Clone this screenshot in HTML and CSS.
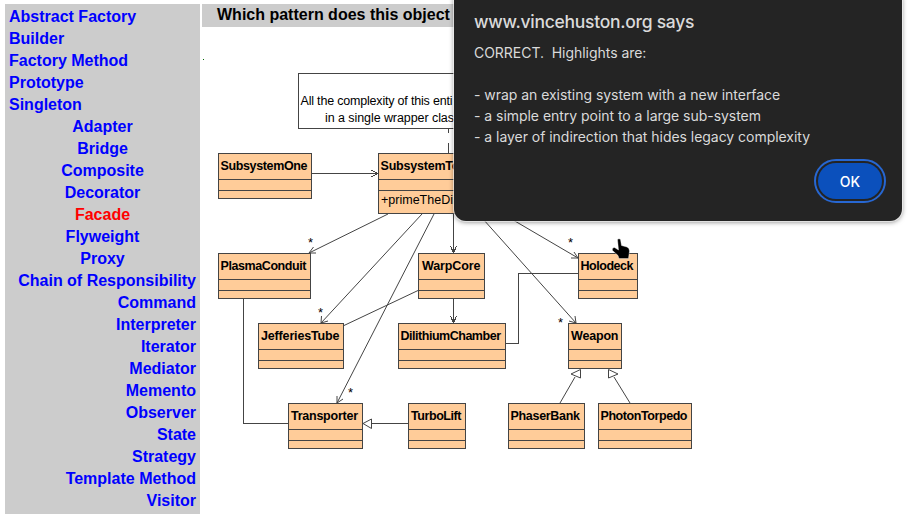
FILE: index.html
```html
<!DOCTYPE html>
<html lang="en">
<head>
<meta charset="utf-8">
<title>Design Patterns Quiz</title>
<link rel="stylesheet" href="styles.css">
</head>
<body>
<div class="page">
  <nav class="patterns">
    <ul class="group creational">
      <li>Abstract Factory</li><li>Builder</li><li>Factory Method</li><li>Prototype</li><li>Singleton</li>
    </ul>
    <ul class="group structural">
      <li>Adapter</li><li>Bridge</li><li>Composite</li><li>Decorator</li><li class="chosen">Facade</li><li>Flyweight</li><li>Proxy</li>
    </ul>
    <ul class="group behavioral">
      <li>Chain of Responsibility</li><li>Command</li><li>Interpreter</li><li>Iterator</li><li>Mediator</li><li>Memento</li><li>Observer</li><li>State</li><li>Strategy</li><li>Template Method</li><li>Visitor</li>
    </ul>
  </nav>
  <main class="content">
    <h1 class="question">Which pattern does this object</h1>
    <svg class="diagram" viewBox="202 27 721 490" width="721" height="490">
      <rect x="203" y="59" width="1" height="1" fill="#060"/>
      <g class="box note"><path d="M298.500 73.500H528.500V128.500H298.500Z"/></g>
      <text class="plain" x="300.500" y="105" textLength="152">All the complexity of this enti</text>
      <text class="plain" x="325" y="122" textLength="129">in a single wrapper clas</text>
      <g class="line">
        <path d="M448.500 129V133M448.500 143V153"/>
        <path d="M312 173.500H378M371 170L378 173.500L371 177"/>
        <path d="M453.500 214V253M450.500 246L453.500 253L456.500 246"/>
        <path d="M453.500 299V323M450.500 316L453.500 323L456.500 316"/>
        <path d="M243.500 299V423.500H288"/>
        <path d="M506 343.500H518.500V273.500H578"/>
        <path d="M372 423.500H408"/>
      </g>
      <g class="slant">
        <path d="M388 214L309 253M313.500 247L309 253L316 253"/>
        <path d="M422 214L321 323M321.500 316L321 323L328 321"/>
        <path d="M434 214L337 403M337 396L337 403L343 399"/>
        <path d="M418 290.500L344 325.500"/>
        <path d="M483 219L576 323M569 321L576 323L575 316"/>
        <path d="M508 217L578 258M571 258L578 258L574 252"/>
        <path d="M560 403L575 377M630 403L614 377"/>
        <path d="M363 423.500L371.500 419V428.500Z"/>
        <path d="M580.500 369.500L571 374L580.500 378Z"/>
        <path d="M608.500 369.500L618 374L608.500 378Z"/>
      </g>
      <g class="box">
        <path d="M218.500 153.500H311.500V198.500H218.500ZM218.500 179.500H311.500M218.500 190.500H311.500"/>
        <path d="M378.500 153.500H528.500V213.500H378.500ZM378.500 179.500H528.500M378.500 190.500H528.500"/>
        <path d="M218.500 253.500H310.500V298.500H218.500ZM218.500 279.500H310.500M218.500 290.500H310.500"/>
        <path d="M418.500 253.500H484.500V298.500H418.500ZM418.500 279.500H484.500M418.500 290.500H484.500"/>
        <path d="M578.500 253.500H637.500V298.500H578.500ZM578.500 279.500H637.500M578.500 290.500H637.500"/>
        <path d="M258.500 323.500H343.500V368.500H258.500ZM258.500 349.500H343.500M258.500 360.500H343.500"/>
        <path d="M398.500 323.500H505.500V368.500H398.500ZM398.500 349.500H505.500M398.500 360.500H505.500"/>
        <path d="M568.500 323.500H621.500V368.500H568.500ZM568.500 349.500H621.500M568.500 360.500H621.500"/>
        <path d="M288.500 403.500H362.500V448.500H288.500ZM288.500 429.500H362.500M288.500 440.500H362.500"/>
        <path d="M408.500 403.500H465.500V448.500H408.500ZM408.500 429.500H465.500M408.500 440.500H465.500"/>
        <path d="M508.500 403.500H584.500V448.500H508.500ZM508.500 429.500H584.500M508.500 440.500H584.500"/>
        <path d="M598.500 403.500H691.500V448.500H598.500ZM598.500 429.500H691.500M598.500 440.500H691.500"/>
      </g>
      <g class="name">
        <text x="220.500" y="170" textLength="87">SubsystemOne</text>
        <text x="380.500" y="170" textLength="79">SubsystemTo</text>
        <text x="220.500" y="270" textLength="86">PlasmaConduit</text>
        <text x="422" y="270" textLength="58.500">WarpCore</text>
        <text x="580.500" y="270" textLength="53">Holodeck</text>
        <text x="261" y="340" textLength="78.500">JefferiesTube</text>
        <text x="400.500" y="340" textLength="100.500">DilithiumChamber</text>
        <text x="571" y="340" textLength="47.500">Weapon</text>
        <text x="291" y="420" textLength="67">Transporter</text>
        <text x="411" y="420" textLength="50.500">TurboLift</text>
        <text x="510.500" y="420" textLength="69.500">PhaserBank</text>
        <text x="600.500" y="420" textLength="87">PhotonTorpedo</text>
      </g>
      <text class="plain" x="381" y="204" textLength="72">+primeTheDi</text>
      <g class="many">
        <text x="308" y="247">*</text><text x="318" y="317">*</text><text x="348" y="397">*</text>
        <text x="568" y="247">*</text><text x="558" y="327">*</text>
      </g>
    </svg>
  </main>
</div>
<section class="dialog">
  <h2 class="dialog-title">www.vincehuston.org says</h2>
  <p class="dialog-text">CORRECT.  Highlights are:

- wrap an existing system with a new interface
- a simple entry point to a large sub-system
- a layer of indirection that hides legacy complexity</p>
  <button class="ok">OK</button>
</section>
<svg class="cursor" viewBox="0 0 20 22" width="20" height="22">
  <path d="M6.500 1.500Q8 0 9.500 1.500L10.500 7.500L16 9Q18.500 10 18.500 13L17.500 20.500H8L7 17.500L1.500 12.500Q.5 9.500 3.500 9.500L7.500 12Z" fill="#000" stroke="#fff" stroke-width=".4"/>
</svg>
</body>
</html>
```

FILE: styles.css
```css
body {
  margin: 0;
  background: #fff;
  overflow: hidden;
  font-family: "Liberation Sans", Arial, sans-serif;
}
.page {
  display: flex;
  align-items: flex-start;
  gap: 2px;
  padding: 4px 0 0 5px;
}
.patterns {
  box-sizing: border-box;
  width: 195px;
  height: 510px;
  padding: 2px 4px;
  background: #ccc;
  color: #00f;
  font-size: 16px;
  font-weight: bold;
  line-height: 22px;
}
.group {
  margin: 0;
  padding: 0;
  list-style: none;
}
.structural { text-align: center; }
.behavioral { text-align: right; }
.chosen { color: #f00; }
.content { flex: 1; }
.question {
  box-sizing: border-box;
  width: 400px;
  height: 23px;
  margin: 0;
  padding-left: 15px;
  background: #ccc;
  font-size: 16px;
  line-height: 22px;
}
.diagram { display: block; }
.line, .slant { fill: none; stroke: #444; stroke-width: 1; }
.line { shape-rendering: crispEdges; }
.box { fill: #fc9; stroke: #444; shape-rendering: crispEdges; }
.note { fill: #fff; }
.name { font-size: 12.5px; font-weight: bold; }
.plain { font-size: 12.5px; }
.many { font-size: 13px; }
.dialog {
  position: absolute;
  left: 454px;
  top: -12px;
  box-sizing: border-box;
  display: flex;
  flex-direction: column;
  width: 448px;
  height: 233px;
  padding: 22px 20px;
  border-radius: 12px;
  background: #242424;
  box-shadow: 0 0 0 1px rgba(255, 255, 255, .6), 0 1px 5px rgba(0, 0, 0, .5);
  color: #dadada;
  font-family: Inter, sans-serif;
}
.dialog-title {
  margin: 0;
  font-size: 17.5px;
  font-weight: 500;
  line-height: 24px;
  letter-spacing: -.27px;
}
.dialog-text {
  margin: 8px 0 0;
  font-size: 14px;
  line-height: 21px;
  letter-spacing: -.035px;
  white-space: pre;
}
.ok {
  align-self: flex-end;
  width: 64px;
  height: 38px;
  margin: 16px 0 0;
  border: 0;
  border-radius: 19px;
  background: #0b50bc;
  outline: 2px solid #2767d2;
  outline-offset: 2px;
  color: #fff;
  font: 500 14px Inter, sans-serif;
}
.cursor {
  position: absolute;
  left: 611px;
  top: 238px;
}
```
